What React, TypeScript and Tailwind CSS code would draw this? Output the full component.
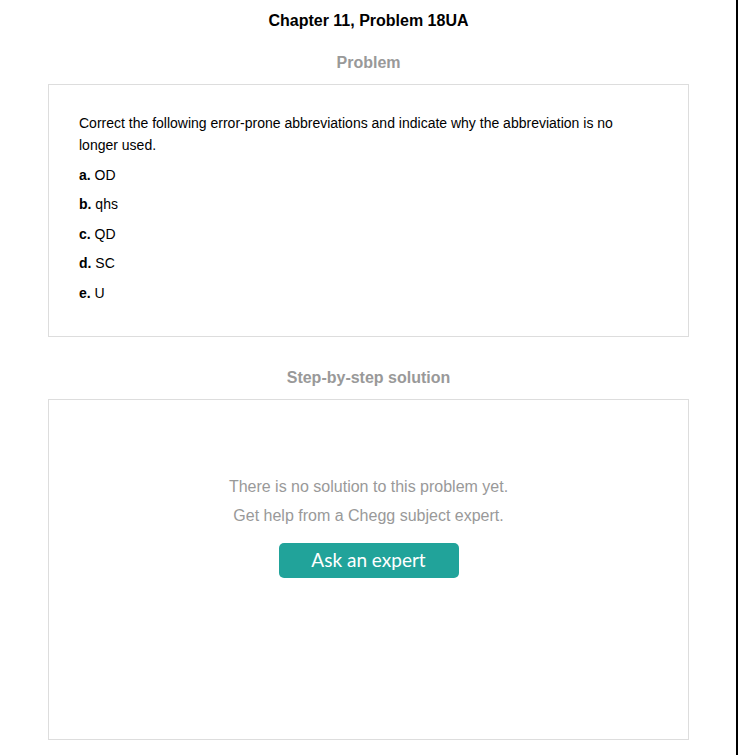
export default function App() {
    const items = [
        ['a.', 'OD'],
        ['b.', 'qhs'],
        ['c.', 'QD'],
        ['d.', 'SC'],
        ['e.', 'U'],
    ];

    return (
        <div className="w-[738px] h-[755px] bg-white overflow-hidden font-['Liberation_Sans',Arial,sans-serif]">
            <div className="w-[738px] h-full border-r-2 border-black pl-[48px] pr-[47px] pt-[11px]">
                <h1 className="text-center text-[16px] leading-[20px] font-bold text-black">
                    Chapter 11, Problem 18UA
                </h1>

                <h2 className="mt-[22px] text-center text-[16px] leading-[20px] font-bold text-[#999999]">
                    Problem
                </h2>
                <div className="mt-[11px] border border-[#dddddd] pl-[30px] pr-[50px] pt-[27px] pb-[32px] text-[14px] text-black">
                    <p className="leading-[22px]">
                        Correct the following error-prone abbreviations and indicate why the abbreviation is no longer used.
                    </p>
                    {items.map(([label, value]) => (
                        <p key={label} className="mt-[7.5px] leading-[22px]">
                            <span className="font-bold">{label}</span> {value}
                        </p>
                    ))}
                </div>

                <h2 className="mt-[31px] text-center text-[16px] leading-[20px] font-bold text-[#999999]">
                    Step-by-step solution
                </h2>
                <div className="mt-[11px] h-[341px] border border-[#dddddd] flex flex-col items-center pt-[72px]">
                    <p className="text-[16px] leading-[29px] text-[#999999]">
                        There is no solution to this problem yet.
                    </p>
                    <p className="text-[16px] leading-[29px] text-[#999999]">
                        Get help from a Chegg subject expert.
                    </p>
                    <button className="mt-[13px] w-[180px] h-[35px] rounded-[5px] bg-[#21a39a] text-white text-[19px] font-['Lato',sans-serif] flex items-center justify-center">
                        Ask an expert
                    </button>
                </div>
            </div>
        </div>
    );
}
